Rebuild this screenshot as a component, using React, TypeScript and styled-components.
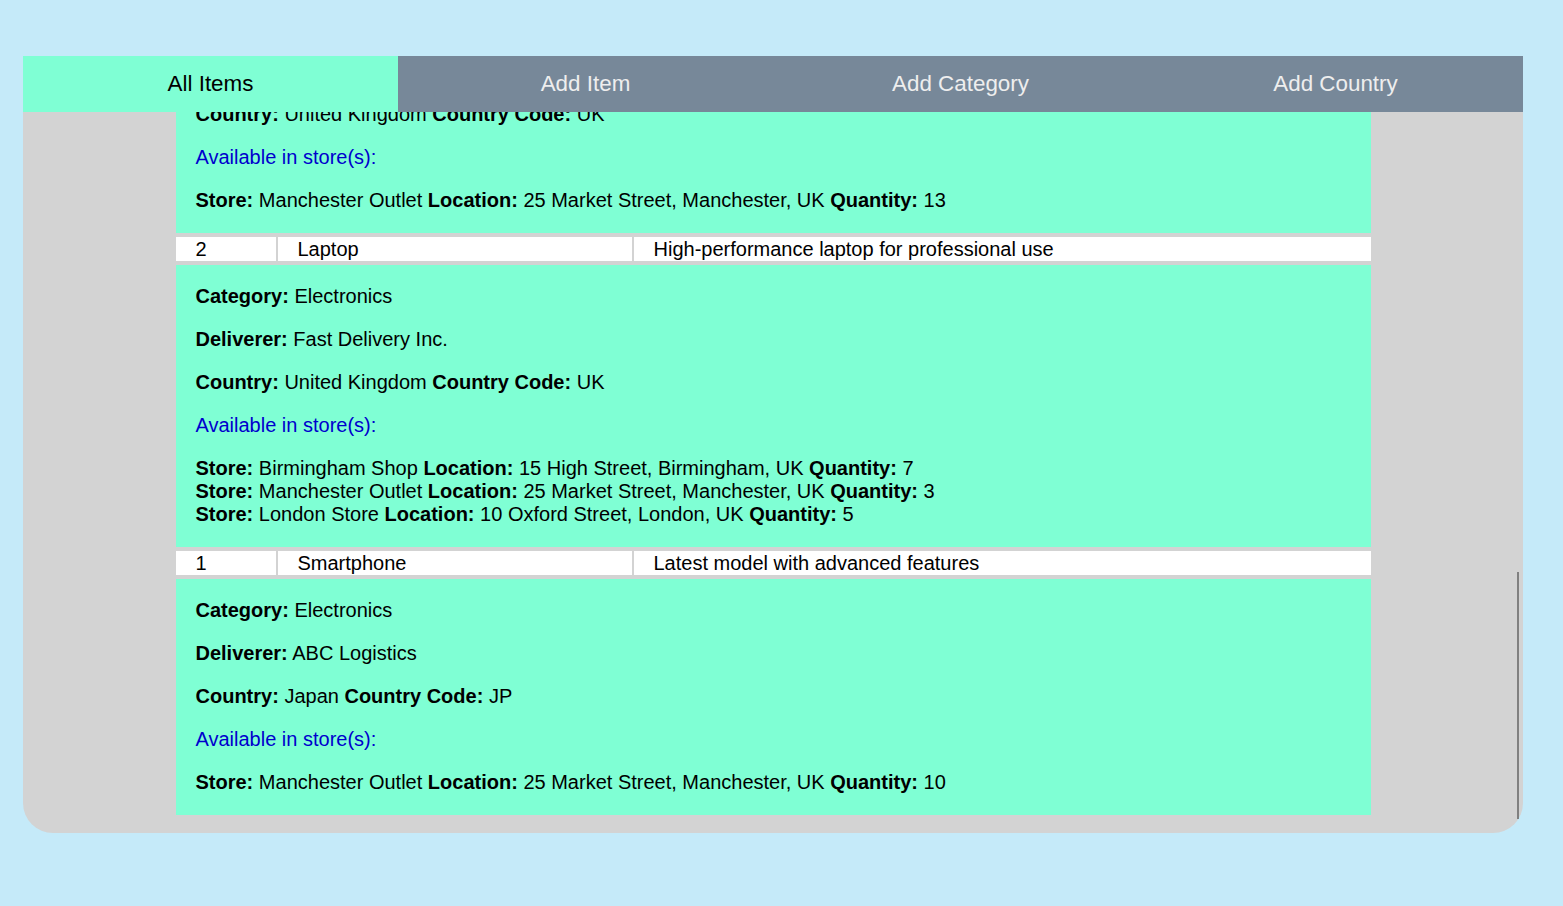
import React, { useLayoutEffect, useRef, useState } from "react";
import styled, { createGlobalStyle } from "styled-components";

const GlobalStyle = createGlobalStyle`
  html, body {
    margin: 0;
    padding: 0;
    background: #c5eaf9;
    font-family: "Liberation Sans", Arial, sans-serif;
  }
`;

const Page = styled.div`
  padding: 56px 0 0 23px;
  min-height: 906px;
  box-sizing: border-box;
`;

const Panel = styled.div`
  width: 1500px;
  background: #d3d3d3;
  border-radius: 0 0 30px 30px;
  padding-bottom: 14px;
`;

const TabBar = styled.nav`
  display: grid;
  grid-template-columns: repeat(4, 1fr);
  height: 56px;
`;

const Tab = styled.button<{ $active?: boolean }>`
  border: none;
  margin: 0;
  padding: 0;
  font-family: "Liberation Sans", Arial, sans-serif;
  font-size: 22.4px;
  background: ${(p) => (p.$active ? "#7fffd4" : "#778899")};
  color: ${(p) => (p.$active ? "#000" : "#eeeeee")};
  cursor: pointer;
`;

const ScrollWrap = styled.div`
  position: relative;
`;

const ScrollArea = styled.div`
  height: 707px;
  overflow-y: auto;
  scrollbar-width: none;
  &::-webkit-scrollbar {
    display: none;
  }
`;

const Thumb = styled.div`
  position: absolute;
  right: 4px;
  width: 2px;
  background: #808080;
`;

const Table = styled.table`
  width: 1199px;
  margin: 0 auto;
  border-spacing: 2px 4px;
  table-layout: fixed;
  font-size: 20px;
  color: #000;
`;

const HeadCell = styled.th`
  background: #ffffff;
  text-align: left;
  padding: 0 20px;
  line-height: 24px;
  font-weight: bold;
`;

const Cell = styled.td`
  background: #ffffff;
  padding: 0 20px;
  line-height: 24px;
  white-space: nowrap;
  overflow: hidden;
`;

const DetailCell = styled.td`
  background: #7fffd4;
  padding: 0 20px 1px;
  line-height: 23px;
`;

const Line = styled.p`
  margin: 20px 0;
`;

const StoreHeading = styled.p`
  margin: 20px 0;
  color: #0000cd;
`;

const StoreList = styled.div`
  margin: 20px 0;
`;

type Store = { name: string; location: string; qty: number };
type Item = {
  id: number;
  name: string;
  description: string;
  category: string;
  deliverer: string;
  country: string;
  code: string;
  stores: Store[];
};

const MAN = "25 Market Street, Manchester, UK";
const BIR = "15 High Street, Birmingham, UK";
const LON = "10 Oxford Street, London, UK";

const items: Item[] = [
  {
    id: 7,
    name: "Coffee Maker",
    description: "Programmable drip coffee maker",
    category: "Home Appliances",
    deliverer: "ABC Logistics",
    country: "Germany",
    code: "DE",
    stores: [
      { name: "London Store", location: LON, qty: 4 },
      { name: "Birmingham Shop", location: BIR, qty: 6 },
    ],
  },
  {
    id: 6,
    name: "Desk Chair",
    description: "Ergonomic office chair with lumbar support",
    category: "Furniture",
    deliverer: "Fast Delivery Inc.",
    country: "United Kingdom",
    code: "UK",
    stores: [{ name: "London Store", location: LON, qty: 8 }],
  },
  {
    id: 5,
    name: "Tablet",
    description: "Lightweight tablet with long battery life",
    category: "Electronics",
    deliverer: "ABC Logistics",
    country: "Japan",
    code: "JP",
    stores: [
      { name: "Birmingham Shop", location: BIR, qty: 2 },
      { name: "Manchester Outlet", location: MAN, qty: 9 },
      { name: "London Store", location: LON, qty: 11 },
    ],
  },
  {
    id: 4,
    name: "Smartwatch",
    description: "Fitness tracking smartwatch",
    category: "Electronics",
    deliverer: "Fast Delivery Inc.",
    country: "Japan",
    code: "JP",
    stores: [{ name: "Birmingham Shop", location: BIR, qty: 12 }],
  },
  {
    id: 3,
    name: "Headphones",
    description: "Noise-cancelling wireless headphones",
    category: "Electronics",
    deliverer: "Fast Delivery Inc.",
    country: "United Kingdom",
    code: "UK",
    stores: [{ name: "Manchester Outlet", location: MAN, qty: 13 }],
  },
  {
    id: 2,
    name: "Laptop",
    description: "High-performance laptop for professional use",
    category: "Electronics",
    deliverer: "Fast Delivery Inc.",
    country: "United Kingdom",
    code: "UK",
    stores: [
      { name: "Birmingham Shop", location: BIR, qty: 7 },
      { name: "Manchester Outlet", location: MAN, qty: 3 },
      { name: "London Store", location: LON, qty: 5 },
    ],
  },
  {
    id: 1,
    name: "Smartphone",
    description: "Latest model with advanced features",
    category: "Electronics",
    deliverer: "ABC Logistics",
    country: "Japan",
    code: "JP",
    stores: [{ name: "Manchester Outlet", location: MAN, qty: 10 }],
  },
];

const tabs = ["All Items", "Add Item", "Add Category", "Add Country"];

function ItemRows({ item }: { item: Item }) {
  return (
    <>
      <tr>
        <Cell>{item.id}</Cell>
        <Cell>{item.name}</Cell>
        <Cell>{item.description}</Cell>
      </tr>
      <tr>
        <DetailCell colSpan={3}>
          <Line>
            <b>Category:</b> {item.category}
          </Line>
          <Line>
            <b>Deliverer:</b> {item.deliverer}
          </Line>
          <Line>
            <b>Country:</b> {item.country} <b>Country Code:</b> {item.code}
          </Line>
          <StoreHeading>Available in store(s):</StoreHeading>
          <StoreList>
            {item.stores.map((s, i) => (
              <div key={i}>
                <b>Store:</b> {s.name} <b>Location:</b> {s.location}{" "}
                <b>Quantity:</b> {s.qty}
              </div>
            ))}
          </StoreList>
        </DetailCell>
      </tr>
    </>
  );
}

export default function App() {
  const ref = useRef<HTMLDivElement>(null);
  const [thumb, setThumb] = useState({ top: 0, height: 0 });

  useLayoutEffect(() => {
    const el = ref.current;
    if (!el) return;
    const update = () => {
      const ch = el.clientHeight;
      const sh = el.scrollHeight;
      setThumb({
        top: (el.scrollTop / sh) * ch,
        height: (ch * ch) / sh,
      });
    };
    el.scrollTop = el.scrollHeight;
    update();
    el.addEventListener("scroll", update);
    return () => el.removeEventListener("scroll", update);
  }, []);

  return (
    <Page>
      <GlobalStyle />
      <Panel>
        <TabBar>
          {tabs.map((t, i) => (
            <Tab key={t} $active={i === 0}>
              {t}
            </Tab>
          ))}
        </TabBar>
        <ScrollWrap>
          <ScrollArea ref={ref}>
            <Table>
              <colgroup>
                <col style={{ width: 100 }} />
                <col style={{ width: 354 }} />
                <col />
              </colgroup>
              <thead>
                <tr>
                  <HeadCell>ID</HeadCell>
                  <HeadCell>Name</HeadCell>
                  <HeadCell>Description</HeadCell>
                </tr>
              </thead>
              <tbody>
                {items.map((it) => (
                  <ItemRows key={it.id} item={it} />
                ))}
              </tbody>
            </Table>
          </ScrollArea>
          <Thumb style={{ top: thumb.top, height: thumb.height }} />
        </ScrollWrap>
      </Panel>
    </Page>
  );
}
